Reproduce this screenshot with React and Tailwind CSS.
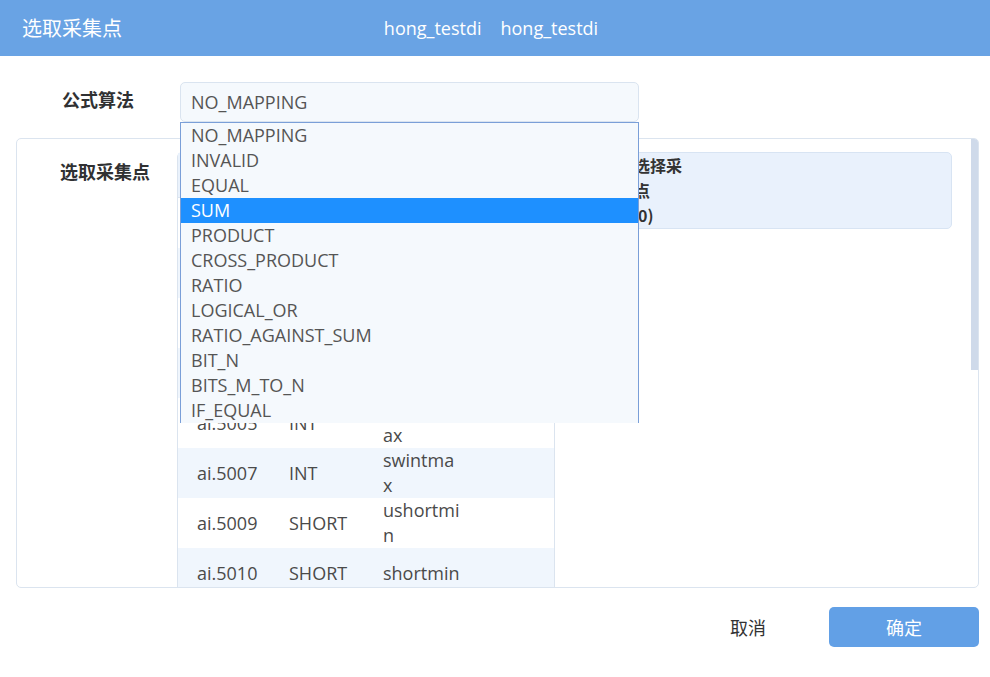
import React from "react";

const options = [
  "NO_MAPPING",
  "INVALID",
  "EQUAL",
  "SUM",
  "PRODUCT",
  "CROSS_PRODUCT",
  "RATIO",
  "LOGICAL_OR",
  "RATIO_AGAINST_SUM",
  "BIT_N",
  "BITS_M_TO_N",
  "IF_EQUAL",
];

const rows = [
  { id: "ai.5001", type: "BOOL", desc: ["bool"] },
  { id: "ai.5002", type: "BYTE", desc: ["byte"] },
  { id: "ai.5003", type: "WORD", desc: ["word"] },
  { id: "ai.5004", type: "INT", desc: ["intmin"] },
  { id: "ai.5005", type: "INT", desc: ["uintmaxm", "ax"] },
  { id: "ai.5007", type: "INT", desc: ["swintma", "x"] },
  { id: "ai.5009", type: "SHORT", desc: ["ushortmi", "n"] },
  { id: "ai.5010", type: "SHORT", desc: ["shortmin"] },
];

export default function App() {
  return (
    <div className="w-[990px] h-[677px] bg-white overflow-hidden font-['Open_Sans','Noto_Sans_CJK_SC',sans-serif]">
      {/* Header */}
      <div className="h-[56px] bg-[#69a3e4] grid grid-cols-[1fr_auto_1fr] items-center text-white">
        <div className="pl-[22px] text-[20px] font-['Noto_Sans_CJK_SC',sans-serif]">选取采集点</div>
        <div className="flex gap-[19px] text-[18px] pr-[8px]">
          <span>hong_testdi</span>
          <span>hong_testdi</span>
        </div>
        <div />
      </div>

      {/* Formula row */}
      <div className="flex items-start pt-[26px]">
        <div className="w-[180px] pl-[62px] pt-[3px] text-[18px] leading-[28px] font-bold text-[#303133] font-['Noto_Sans_CJK_SC',sans-serif]">
          公式算法
        </div>
        <div className="relative z-10 w-[459px]">
          <div className="h-[40px] rounded-[5px] border border-[#dae4f0] bg-[#f5f9fd] px-[10px] flex items-center text-[18px] text-[#555]">
            NO_MAPPING
          </div>
          <div className="absolute left-0 top-[40px] w-[459px] border-x border-t border-[#7a9fd8] bg-[#f5f9fd]">
            {options.map((o) => (
              <div
                key={o}
                className={
                  "h-[25px] leading-[25px] px-[10px] text-[18px] " +
                  (o === "SUM" ? "bg-[#1e90ff] text-white" : "text-[#555]")
                }
              >
                {o}
              </div>
            ))}
          </div>
        </div>
      </div>

      {/* Panel */}
      <div className="relative mt-[16px] ml-[16px] w-[963px] h-[450px] rounded-[5px] border border-[#dbe4ef] overflow-hidden">
        <div className="flex pt-[13px]">
          <div className="w-[160px] pl-[43px] pt-[5px] text-[18px] leading-[28px] font-bold text-[#303133] font-['Noto_Sans_CJK_SC',sans-serif]">
            选取采集点
          </div>
          {/* Left table */}
          <div className="w-[378px] border border-[#dbe4ef] rounded-t-[5px]">
            <div className="h-[45px] bg-[#eaf2fc] border-b border-[#dbe4ef] grid grid-cols-[92px_94px_1fr] items-center text-[16px] font-bold text-[#333] font-['Noto_Sans_CJK_SC',sans-serif]">
              <div className="pl-[19px]">名称</div>
              <div className="pl-[19px]">类型</div>
              <div className="pl-[19px]">描述</div>
            </div>
            {rows.map((r, i) => (
              <div
                key={r.id}
                className={
                  "h-[50px] grid grid-cols-[92px_94px_1fr] items-center text-[18px] text-[#4a4a4a] " +
                  (i % 2 === 1 ? "bg-[#f0f6fd]" : "bg-white")
                }
              >
                <div className="pl-[19px] leading-[25px]">{r.id}</div>
                <div className="pl-[19px] leading-[25px]">{r.type}</div>
                <div className="pl-[19px] leading-[25px]">
                  {r.desc.map((d) => (
                    <div key={d}>{d}</div>
                  ))}
                </div>
              </div>
            ))}
          </div>
          {/* Right selected header */}
          <div className="ml-[20px] w-[377px] self-start border border-[#d8e4f3] rounded-[5px] bg-[#e9f1fc] pl-[42px] text-[16px] leading-[25px] font-bold text-[#333] font-['Noto_Sans_CJK_SC',sans-serif]">
            <span className="block">已选择采</span>
            <span className="block">集点</span>
            <span className="block pl-[14px]">(0)</span>
          </div>
        </div>
        {/* scrollbar thumb */}
        <div className="absolute right-0 top-0 w-[7px] h-[231px] bg-[#cfdaea]" />
      </div>

      {/* Footer */}
      <div className="mt-[19px] flex justify-end gap-[6px] pr-[11px]">
        <button className="w-[150px] h-[40px] text-[18px] text-[#333] font-['Noto_Sans_CJK_SC',sans-serif]">
          取消
        </button>
        <button className="w-[150px] h-[40px] rounded-[5px] bg-[#62a0e6] text-[18px] text-white font-['Noto_Sans_CJK_SC',sans-serif]">
          确定
        </button>
      </div>
    </div>
  );
}
